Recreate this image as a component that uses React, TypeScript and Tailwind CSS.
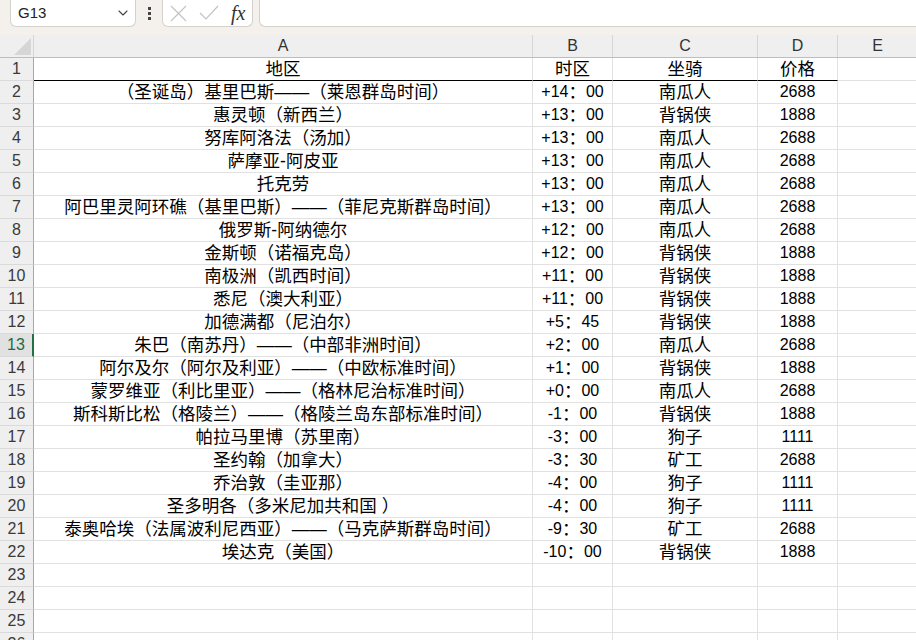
import React from 'react';
import { ChevronDown } from 'lucide-react';

type Row = [string, string, string, string];

const rows: Row[] = [
  ['地区', '时区', '坐骑', '价格'],
  ['（圣诞岛）基里巴斯——（莱恩群岛时间）', '+14：00', '南瓜人', '2688'],
  ['惠灵顿（新西兰）', '+13：00', '背锅侠', '1888'],
  ['努库阿洛法（汤加）', '+13：00', '南瓜人', '2688'],
  ['萨摩亚-阿皮亚', '+13：00', '南瓜人', '2688'],
  ['托克劳', '+13：00', '南瓜人', '2688'],
  ['阿巴里灵阿环礁（基里巴斯）——（菲尼克斯群岛时间）', '+13：00', '南瓜人', '2688'],
  ['俄罗斯-阿纳德尔', '+12：00', '南瓜人', '2688'],
  ['金斯顿（诺福克岛）', '+12：00', '背锅侠', '1888'],
  ['南极洲（凯西时间）', '+11：00', '背锅侠', '1888'],
  ['悉尼（澳大利亚）', '+11：00', '背锅侠', '1888'],
  ['加德满都（尼泊尔）', '+5：45', '背锅侠', '1888'],
  ['朱巴（南苏丹）——（中部非洲时间）', '+2：00', '南瓜人', '2688'],
  ['阿尔及尔（阿尔及利亚）——（中欧标准时间）', '+1：00', '背锅侠', '1888'],
  ['蒙罗维亚（利比里亚）——（格林尼治标准时间）', '+0：00', '南瓜人', '2688'],
  ['斯科斯比松（格陵兰）——（格陵兰岛东部标准时间）', '-1：00', '背锅侠', '1888'],
  ['帕拉马里博（苏里南）', '-3：00', '狗子', '1111'],
  ['圣约翰（加拿大）', '-3：30', '矿工', '2688'],
  ['乔治敦（圭亚那）', '-4：00', '狗子', '1111'],
  ['圣多明各（多米尼加共和国 ）', '-4：00', '狗子', '1111'],
  ['泰奥哈埃（法属波利尼西亚）——（马克萨斯群岛时间）', '-9：30', '矿工', '2688'],
  ['埃达克（美国）', '-10：00', '背锅侠', '1888'],
];

const cell = 'h-[23px] shrink-0 flex items-center justify-center border-r border-b border-[#e1e1e1] whitespace-nowrap overflow-hidden';

// 时区: digits in latin size, full-width colon in CJK size
function Zone({ v }: { v: string }) {
  const [a, b] = v.split('：');
  if (b === undefined) return <span className="text-[17.5px]">{v}</span>;
  return (
    <span className="flex items-center">
      <span className="text-[16px]">{a}</span>
      <span className="text-[17.5px]">：</span>
      <span className="text-[16px]">{b}</span>
    </span>
  );
}

function RowHead({ n }: { n: number }) {
  const active = n === 13;
  return (
    <div
      className={`w-[34px] h-[23px] shrink-0 flex items-center justify-center text-[16px] border-b border-[#dadada] ${
        active
          ? 'bg-[#e1e1e1] text-[#1e6b43] border-r-2 border-r-[#217346]'
          : 'bg-[#efefef] text-[#3a3a3a] border-r border-r-[#a8a8a8]'
      }`}
    >
      {n}
    </div>
  );
}

export default function App() {
  const total = 26;
  return (
    <div className="w-[916px] h-[640px] overflow-hidden bg-white text-black font-['Liberation_Sans','Noto_Sans_CJK_SC',sans-serif]">
      {/* formula bar */}
      <div className="h-[35px] bg-[#f4f1ed] flex items-start">
        <div className="ml-[10px] w-[126px] h-[27px] bg-white border border-t-0 border-[#d5d1cc] rounded-b-[6px] flex items-center justify-between pl-[7px] pr-[4px]">
          <span className="text-[15px] text-[#222]">G13</span>
          <ChevronDown className="w-[16px] h-[16px] text-[#444]" strokeWidth={1.6} />
        </div>
        <div className="w-[26px] h-[27px] flex flex-col items-center justify-center gap-[2px]">
          <span className="w-[3px] h-[3px] bg-[#444]" />
          <span className="w-[3px] h-[3px] bg-[#444]" />
          <span className="w-[3px] h-[3px] bg-[#444]" />
        </div>
        <div className="w-[91px] h-[27px] bg-white border border-t-0 border-[#d5d1cc] rounded-b-[6px] flex items-center pl-[7px] gap-[12px]">
          <svg width="17" height="17" viewBox="0 0 17 17" className="text-[#c3c3c3]">
            <path d="M1 1 L16 16 M16 1 L1 16" stroke="currentColor" strokeWidth="1.2" fill="none" />
          </svg>
          <svg width="20" height="16" viewBox="0 0 20 16" className="text-[#c3c3c3]">
            <path d="M1 8 L7 14 L19 1" stroke="currentColor" strokeWidth="1.2" fill="none" />
          </svg>
          <span className="font-['Liberation_Serif',serif] italic text-[20px] text-[#333] leading-none">fx</span>
        </div>
        <div className="ml-[6px] flex-1 h-[27px] bg-white border border-t-0 border-r-0 border-[#d5d1cc] rounded-bl-[6px]" />
      </div>

      {/* column headers */}
      <div className="flex h-[23px] bg-[#efefef] border-b border-[#bdbdbd] text-[16px] text-[#333]">
        <div className="w-[34px] shrink-0 border-r border-[#d5d5d5] flex items-end justify-end pr-[2px] pb-[2px]">
          <svg width="17" height="17" viewBox="0 0 17 17">
            <path d="M17 0 L17 17 L0 17 Z" fill="#d6d6d6" />
          </svg>
        </div>
        <div className="w-[499px] shrink-0 flex items-center justify-center border-r border-[#d5d5d5]">A</div>
        <div className="w-[80px] shrink-0 flex items-center justify-center border-r border-[#d5d5d5]">B</div>
        <div className="w-[145px] shrink-0 flex items-center justify-center border-r border-[#d5d5d5]">C</div>
        <div className="w-[80px] shrink-0 flex items-center justify-center border-r border-[#d5d5d5]">D</div>
        <div className="w-[80px] shrink-0 flex items-center justify-center border-r border-[#d5d5d5]">E</div>
      </div>

      {/* rows */}
      {Array.from({ length: total }, (_, i) => {
        const r = rows[i];
        const first = i === 0;
        const bb = first ? ' border-b-black' : '';
        return (
          <div key={i} className="flex">
            <RowHead n={i + 1} />
            <div className={`${cell} w-[499px] text-[17.5px]${bb}`}>{r ? r[0] : ''}</div>
            <div className={`${cell} w-[80px]${bb}`}>{r ? first ? <span className="text-[17.5px]">{r[1]}</span> : <Zone v={r[1]} /> : ''}</div>
            <div className={`${cell} w-[145px] text-[17.5px]${bb}`}>{r ? r[2] : ''}</div>
            <div className={`${cell} w-[80px] ${first ? 'text-[17.5px]' : 'text-[16px]'}${bb}`}>{r ? r[3] : ''}</div>
            <div className={`${cell} w-[80px]`} />
          </div>
        );
      })}
    </div>
  );
}
